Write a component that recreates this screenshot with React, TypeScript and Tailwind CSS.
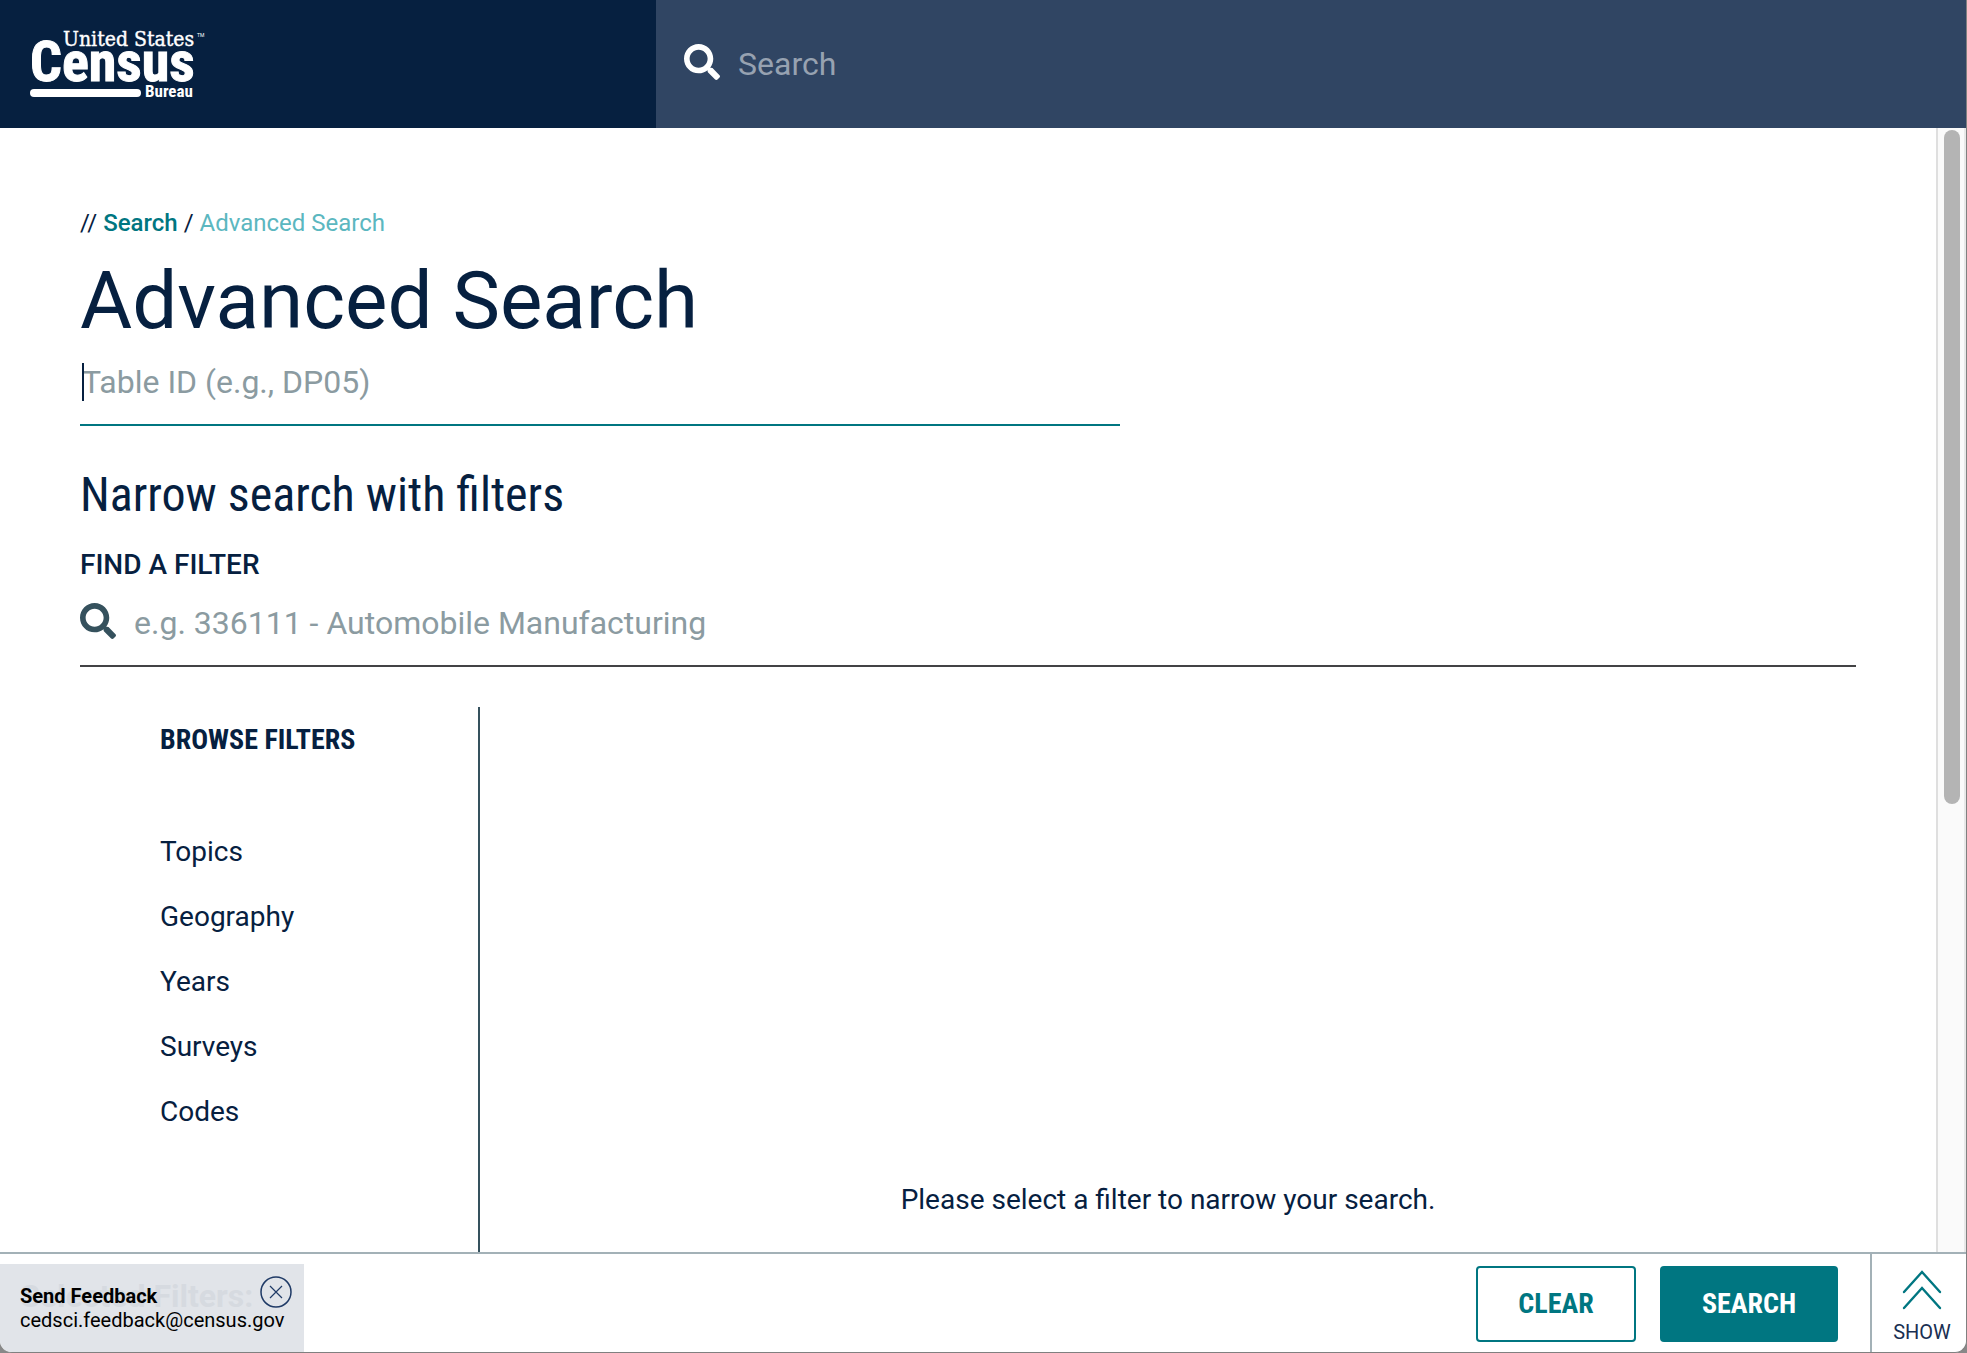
import { FaSearch } from "react-icons/fa";

const filters = ["Topics", "Geography", "Years", "Surveys", "Codes"];

const CensusLogo = () => {
  return (
    <svg width="176" height="72" viewBox="0 0 176 72" fill="#fff" stroke="#fff" role="img" aria-label="United States Census Bureau">
      <text x="33" y="18" fontSize="21" strokeWidth="0.4" className="font-['DejaVu_Serif_Condensed','DejaVu_Serif',serif]">
        United States
      </text>
      <text x="0" y="53" fontSize="56" fontWeight="700" strokeWidth="1" className="font-['Roboto_Condensed',Roboto,sans-serif]">
        Census
      </text>
      <rect x="0" y="61" width="111" height="8" rx="4" stroke="none" />
      <text x="115" y="69" fontSize="17" fontWeight="700" stroke="none" className="font-['Roboto_Condensed',Roboto,sans-serif]">
        Bureau
      </text>
      <text x="167" y="9" fontSize="5" stroke="none" className="font-[Roboto,sans-serif]">
        TM
      </text>
    </svg>
  );
};

const Header = () => {
  return (
    <header className="flex h-32 shrink-0">
      <div className="flex w-[656px] items-center bg-[#062040] px-[30px]">
        <a href="#home">
          <CensusLogo />
        </a>
      </div>
      <label className="flex flex-1 items-start gap-[18px] bg-[#304563] px-7 py-11 text-white">
        <FaSearch className="size-9" />
        <input
          type="text"
          aria-label="Search"
          placeholder="Search"
          className="h-10 flex-1 bg-transparent text-[32px] outline-none placeholder:text-[#97a2b1]"
        />
      </label>
    </header>
  );
};

const SearchPanel = () => {
  return (
    <main className="flex flex-1 flex-col overflow-hidden px-20 pt-20">
      <nav aria-label="Breadcrumb" className="flex gap-1.5 text-2xl leading-[30px]">
        <span>//</span>
        <a href="#search" className="font-medium text-[#007681]">Search</a>
        <span>/</span>
        <a href="#advanced" className="text-[#5bb7c0]">Advanced Search</a>
      </nav>
      <h1 className="mt-[15px] text-[80px] leading-[96px]">Advanced Search</h1>
      <div className="relative mt-[13px] w-[1040px] max-w-full border-b-2 border-[#007681] pb-[22px]">
        <input
          type="text"
          aria-label="Table ID"
          placeholder="Table ID (e.g., DP05)"
          className="block h-10 w-full px-0.5 text-[32px] outline-none placeholder:text-[#8b9ba1]"
        />
        <span className="absolute left-0.5 top-px h-[38px] w-0.5 bg-[#062040]" />
      </div>
      <h2 className="mt-[41px] font-['Roboto_Condensed',Roboto,sans-serif] text-[48px] leading-[56px]">
        Narrow search with filters
      </h2>
      <label htmlFor="find" className="mt-[26px] text-[28px] font-medium leading-8">FIND A FILTER</label>
      <div className="mt-[22px] flex items-start gap-[18px] border-b-2 border-[#434345] pb-[22px]">
        <FaSearch className="size-9 text-[#35515d]" />
        <input
          id="find"
          type="text"
          placeholder="e.g. 336111 - Automobile Manufacturing"
          className="h-10 flex-1 text-[32px] outline-none placeholder:text-[#8b9ba1]"
        />
      </div>
      <div className="mt-10 flex flex-1 text-[28px] leading-[33px]">
        <section className="w-[400px] border-r-2 border-[#35515d] pl-20 pt-4">
          <h3 className="font-['Roboto_Condensed',Roboto,sans-serif] font-bold">BROWSE FILTERS</h3>
          <ul className="mt-[79px] flex flex-col gap-8">
            {filters.map((name) => (
              <li key={name}>
                <button type="button" className="block">{name}</button>
              </li>
            ))}
          </ul>
        </section>
        <p className="flex-1 self-end pb-9 text-center">Please select a filter to narrow your search.</p>
      </div>
    </main>
  );
};

const Footer = () => {
  return (
    <footer className="relative flex h-[100px] shrink-0 justify-end border-t-2 border-[#a3b1b7]">
      <aside className="absolute bottom-0 left-0 flex h-[88px] w-[304px] flex-col justify-center bg-[#e1e4e9] pl-5 text-xl leading-6 text-black">
        <h4 className="absolute left-5 top-3 text-[32px] font-bold leading-10 text-[#d6dae0]">Selected Filters:</h4>
        <strong className="relative font-bold">Send Feedback</strong>
        <a href="mailto:cedsci.feedback@census.gov" className="relative">cedsci.feedback@census.gov</a>
        <button type="button" aria-label="Close feedback" className="absolute right-3 top-3">
          <svg width="32" height="32" viewBox="0 0 32 32" fill="none" stroke="#1f3a66">
            <circle cx="16" cy="16" r="15" strokeWidth="1.5" />
            <path d="M10 10L22 22M22 10L10 22" strokeWidth="1.2" />
          </svg>
        </button>
      </aside>
      <div className="flex gap-6 py-3 pr-8 font-['Roboto_Condensed',Roboto,sans-serif] text-[28px] font-bold">
        <button type="button" className="h-[76px] w-40 rounded border-2 border-[#007681] text-[#007681]">CLEAR</button>
        <button type="button" className="h-[76px] w-[178px] rounded bg-[#007681] text-white">SEARCH</button>
      </div>
      <button type="button" className="flex w-24 flex-col items-center border-l-2 border-[#a3b1b7] pl-1.5 pt-4 text-xl leading-6 text-[#1a2f52]">
        <svg width="40" height="40" viewBox="0 0 40 40" fill="none" stroke="#007681" strokeWidth="2.4" strokeLinecap="round">
          <path d="M2 22L20 2L38 22M2 38L20 18L38 38" />
        </svg>
        <span className="mt-2.5">SHOW</span>
      </button>
    </footer>
  );
};

const App = () => {
  return (
    <div className="h-screen bg-[#888]">
      <div className="flex h-full flex-col overflow-hidden rounded-b-xl border-b border-r border-[#808080] bg-white font-[Roboto,sans-serif] text-[#062040]">
        <Header />
        <div className="flex min-h-0 flex-1">
          <SearchPanel />
          <div className="w-[30px] border-x-2 border-l-[#dfdfdf] border-r-[#e8e8e8] bg-[#fafafa] pl-1.5 pt-0.5">
            <div className="h-[674px] w-4 rounded-full bg-[#b4b4b4]" />
          </div>
        </div>
        <Footer />
      </div>
    </div>
  );
};

export default App;
